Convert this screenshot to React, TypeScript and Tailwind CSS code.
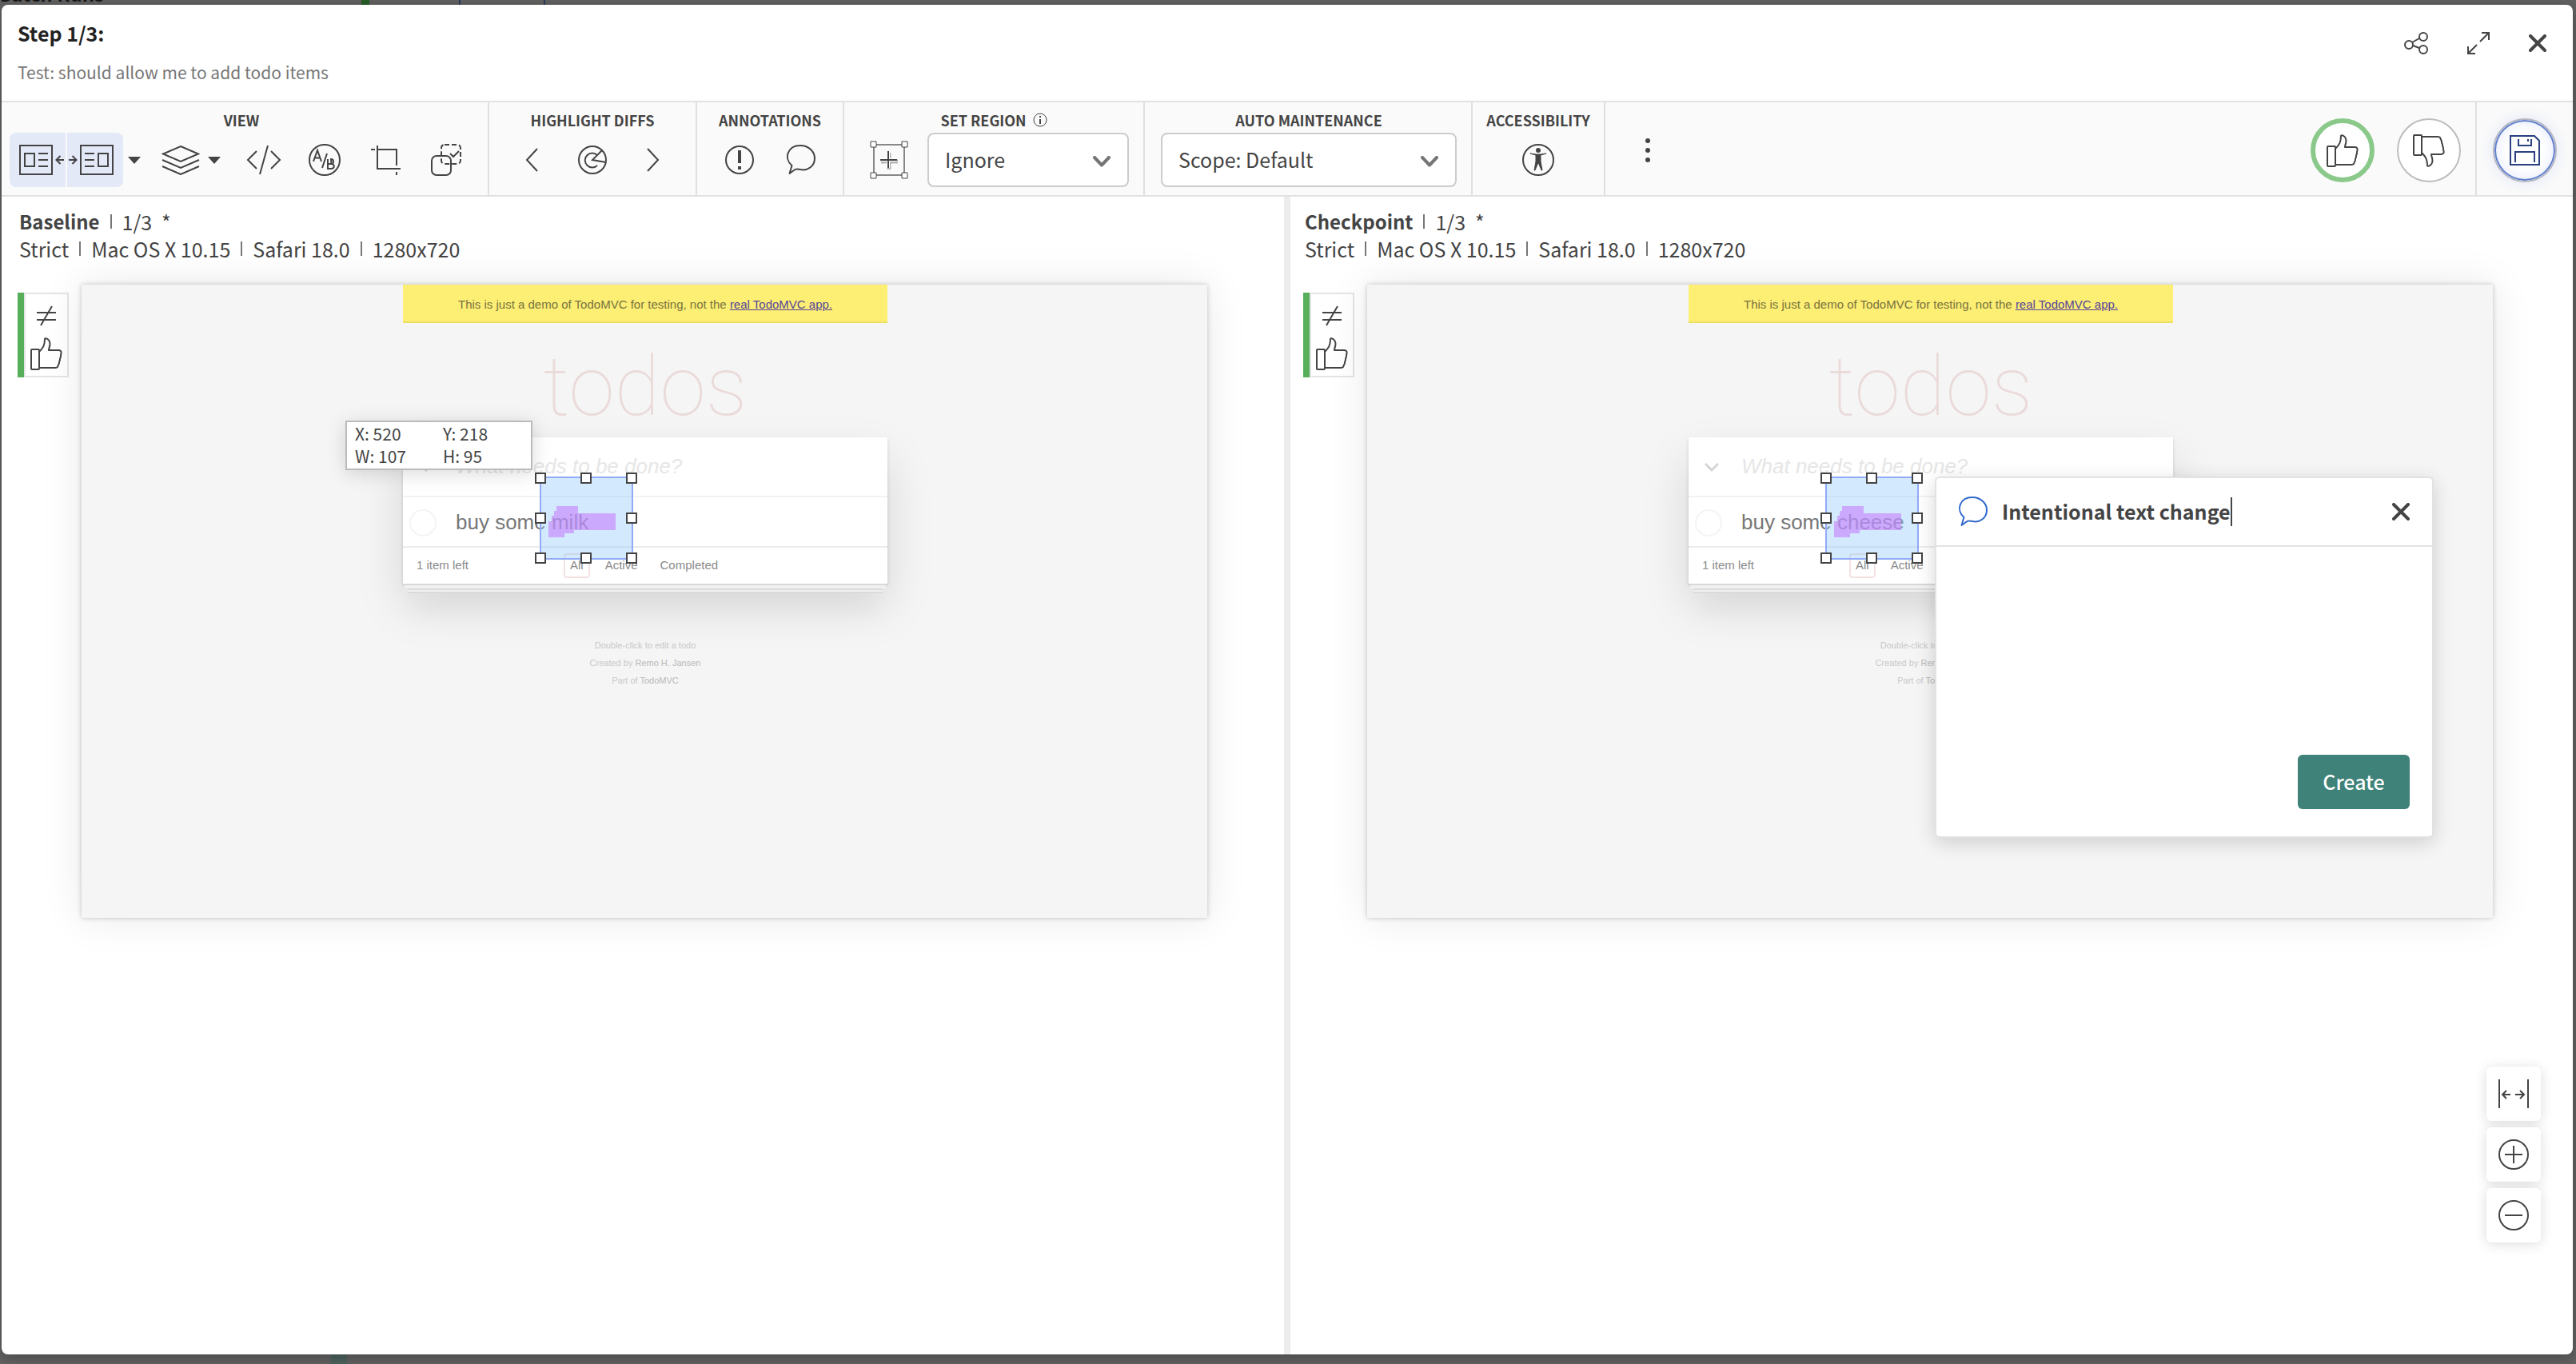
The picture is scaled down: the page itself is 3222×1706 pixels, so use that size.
import type { ReactNode } from "react";

function Svg({ w, h, sw = 2, className = "", children }: { w: number; h: number; sw?: number; className?: string; children: ReactNode }) {
  return (
    <svg width={w} height={h} viewBox={`0 0 ${w} ${h}`} fill="none" stroke="currentColor" strokeWidth={sw} aria-hidden="true" className={`shrink-0 ${className}`}>
      {children}
    </svg>
  );
}

function ThumbIcon({ down = false }: { down?: boolean }) {
  return (
    <Svg w={40} h={41}>
      <g transform={down ? "matrix(1 0 0 -1 0 41)" : undefined} strokeLinejoin="round">
        <rect x="1" y="15" width="10" height="25" rx="1" />
        <path d="M11 18C16 13 18 10 18 2C18 0.5 24 1 24.500 8C24.500 12 22.500 15 23 16H35C38 16 39 17.500 38.500 20C38.500 21 37.500 22 38 24C38 25 36.500 26 37 28C37 29.500 35.500 30 36 32C36 33.500 34.500 34 34.500 36C34 37.500 33 38 31 38H11" />
      </g>
    </Svg>
  );
}

function BubbleIcon() {
  return (
    <Svg w={38} h={38}>
      <path d="M5.500 36L8.500 26C-2 17 3 1 19 1C30 1 37 9 37 17C37 27 28 33 19 31C15 30 13 30 11 32Z" strokeLinejoin="round" />
    </Svg>
  );
}

function CloseIcon({ size }: { size: number }) {
  return (
    <svg width={size} height={size} viewBox="0 0 22 22" fill="none" stroke="currentColor" strokeWidth="4" strokeLinecap="round" aria-hidden="true">
      <path d="M2 2L20 20M20 2L2 20" />
    </svg>
  );
}

function Caret() {
  return (
    <svg width="16" height="9" viewBox="0 0 16 9" fill="currentColor" aria-hidden="true">
      <path d="M0 0H16L8 9Z" />
    </svg>
  );
}

function IconButton({ label, className = "w-[76px]", children }: { label: string; className?: string; children: ReactNode }) {
  return (
    <button type="button" aria-label={label} className={`flex shrink-0 items-center justify-center ${className}`}>
      {children}
    </button>
  );
}

function Group({ title, className, row = "justify-center", children }: { title: ReactNode; className: string; row?: string; children: ReactNode }) {
  return (
    <section className={`flex shrink-0 flex-col border-r-2 border-[#e0e0e0] pt-2.5 ${className}`}>
      <h2 className="mb-1 flex items-center justify-center gap-2 text-lg leading-6 font-bold whitespace-nowrap">{title}</h2>
      <div className={`flex h-[68px] items-stretch ${row}`}>{children}</div>
    </section>
  );
}

function Dropdown({ label, value }: { label: string; value: string }) {
  return (
    <div className="relative flex flex-1">
      <select aria-label={label} defaultValue={value} className="w-full appearance-none rounded-lg border-2 border-[#ccc] bg-white pr-14 pl-5 text-[25px]">
        <option>{value}</option>
      </select>
      <svg width="22" height="14" viewBox="0 0 22 14" fill="none" stroke="#757575" strokeWidth="4" strokeLinecap="round" strokeLinejoin="round" aria-hidden="true" className="pointer-events-none absolute top-[29px] right-[23px]">
        <path d="M2 2L11 11.500L20 2" />
      </svg>
    </div>
  );
}

function Toolbar() {
  return (
    <div className="flex h-[120px] shrink-0 border-y-2 border-[#e2e2e2] bg-[#fafafa]">
      <Group title="VIEW" className="w-[610px] pr-[18px] pl-2.5" row="justify-start">
        <IconButton label="Show baseline" className="w-[70px] rounded-l-lg bg-[#e4e9f8]">
          <Svg w={70} h={40}>
            <path d="M13 2H53V38H13ZM19 12H31V28H19ZM36 12H48M36 20H48M36 28H48M68 20H59M63.500 15L58.500 20L63.500 25" />
          </Svg>
        </IconButton>
        <IconButton label="Show checkpoint" className="ml-0.5 w-[70px] rounded-r-lg bg-[#e4e9f8]">
          <Svg w={70} h={40}>
            <path d="M17 2H57V38H17ZM39 12H51V28H39ZM22 12H34M22 20H34M22 28H34M2 20H11M6.500 15L11.500 20L6.500 25" />
          </Svg>
        </IconButton>
        <IconButton label="View options" className="w-7"><Caret /></IconButton>
        <IconButton label="Layers" className="ml-4 w-14">
          <Svg w={48} h={38}>
            <path d="M24 2L46 11.500L24 21L2 11.500ZM1 19L24 29L47 19M1 27L24 37L47 27" />
          </Svg>
        </IconButton>
        <IconButton label="Layer options" className="w-7"><Caret /></IconButton>
        <IconButton label="View code" className="ml-2.5 w-[76px]">
          <Svg w={44} h={38}>
            <path d="M13 8L2 19L13 30M31 8L42 19L31 30M27 1L17 37" />
          </Svg>
        </IconButton>
        <IconButton label="A/B variations">
          <Svg w={42} h={42}>
            <circle cx="21" cy="21" r="19" />
            <path d="M7 23L12 9L17 23M9 18.500H15M24 13L18 31" />
            <path d="M25 20V32H29C34 32 34 26 29.500 26H25M29.500 26C33 26 33 20 29 20Z" />
          </Svg>
        </IconButton>
        <IconButton label="Crop">
          <Svg w={38} h={38}>
            <path d="M9 1V30H38M14 6H33V26M1 6H6M33 34V38M9 6H14" />
          </Svg>
        </IconButton>
        <IconButton label="Select regions">
          <Svg w={40} h={42}>
            <rect x="2" y="16" width="24" height="24" rx="6" />
            <rect x="14" y="2" width="24" height="24" rx="4" strokeDasharray="6 3" />
            <path d="M25 13L29 17L36 10" />
          </Svg>
        </IconButton>
      </Group>
      <Group title="HIGHLIGHT DIFFS" className="w-[260px]">
        <IconButton label="Previous diff"><Svg w={16} h={30}><path d="M15 1L2 15L15 29" /></Svg></IconButton>
        <IconButton label="Radar">
          <Svg w={38} h={38}>
            <circle cx="19" cy="19" r="17" />
            <path d="M31 7L19 19L36 22M25 13A9 9 0 1 0 25 26" />
          </Svg>
        </IconButton>
        <IconButton label="Next diff"><Svg w={16} h={30}><path d="M1 1L14 15L1 29" /></Svg></IconButton>
      </Group>
      <Group title="ANNOTATIONS" className="w-[184px]">
        <IconButton label="Add issue">
          <Svg w={38} h={38}>
            <circle cx="19" cy="19" r="17" />
            <path d="M19 7V23M19 27V31" strokeWidth="4" />
          </Svg>
        </IconButton>
        <IconButton label="Add comment"><BubbleIcon /></IconButton>
      </Group>
      <Group
        title={
          <>
            SET REGION
            <Svg w={18} h={18} sw={1}>
              <circle cx="9" cy="9" r="8" />
              <path d="M9 8V14M9 4V6" strokeWidth="2" />
            </Svg>
          </>
        }
        className="w-[376px] px-[18px]"
      >
        <IconButton label="Draw region" className="mr-2.5 w-[76px]">
          <Svg w={48} h={48}>
            <rect x="5" y="5" width="38" height="38" stroke="#888" />
            <path d="M24 15V36M14 26H35" stroke="#b5b5b5" strokeWidth="5" />
            <path d="M23 13V34M13 24H34" stroke="#fff" strokeWidth="4" />
            <path d="M23 13V34M13 24H34" />
            <path d="M1 1H8V8H1ZM40 1H47V8H40ZM1 40H8V47H1ZM40 40H47V47H40Z" fill="#fff" strokeWidth="1" />
          </Svg>
        </IconButton>
        <Dropdown label="Set region" value="Ignore" />
      </Group>
      <Group title="AUTO MAINTENANCE" className="w-[410px] pr-[18px] pl-5">
        <Dropdown label="Auto maintenance" value="Scope: Default" />
      </Group>
      <Group title="ACCESSIBILITY" className="w-[166px]">
        <IconButton label="Accessibility">
          <Svg w={42} h={42}>
            <circle cx="21" cy="21" r="19" />
            <circle cx="21" cy="9" r="3" fill="currentColor" stroke="none" />
            <path d="M11 13L18 15V23L16 34H17L21 24L25 34H26L24 23V15L31 13L24 14H18L11 13Z" fill="currentColor" strokeWidth="1" strokeLinejoin="round" />
          </Svg>
        </IconButton>
      </Group>
      <IconButton label="More actions" className="w-[106px] pt-1">
        <svg width="6" height="30" viewBox="0 0 6 30" fill="currentColor" aria-hidden="true">
          <circle cx="3" cy="3" r="3" />
          <circle cx="3" cy="15" r="3" />
          <circle cx="3" cy="27" r="3" />
        </svg>
      </IconButton>
      <div className="ml-auto flex items-center gap-7 border-r-2 border-[#e0e0e0] pt-1 pr-[18px]">
        <IconButton label="Accept" className="size-20 rounded-full border-[6px] border-[#8bc98b] bg-white"><ThumbIcon /></IconButton>
        <IconButton label="Reject" className="size-20 rounded-full border-2 border-[#bdbdbd] bg-white"><ThumbIcon down /></IconButton>
      </div>
      <div className="flex items-center px-5 pt-1">
        <IconButton label="Save" className="size-20 rounded-full border-2 border-[#b4b7c2] bg-white text-[#2a4080] shadow-[inset_0_0_0_2px_#5f7fd0,inset_0_0_18px_#dde4f8,0_0_18px_#dfe5f5]">
          <Svg w={38} h={38}>
            <path d="M1 1H31L37 7V37H1ZM11 5V13H27V5M23 5V8M7 34V21H31V34" />
          </Svg>
        </IconButton>
      </div>
    </div>
  );
}

function Separator() {
  return <span className="mx-[13px] h-[18px] w-0.5 shrink-0 bg-[#777]" />;
}

const handles = [
  "-top-[7px] -left-2",
  "-top-[7px] left-[49px]",
  "-top-[7px] -right-[7px]",
  "top-[43px] -left-2",
  "top-[43px] -right-[7px]",
  "-bottom-[7px] -left-2",
  "-bottom-[7px] left-[49px]",
  "-bottom-[7px] -right-[7px]",
];

function Selection() {
  return (
    <div className="absolute top-[240px] left-[171px] h-[104px] w-[117px] border-2 border-[#92aaf7] bg-[#90c8fa]/40">
      <svg width="84" height="40" viewBox="0 0 84 40" className="absolute top-[35px] left-[9px]" aria-hidden="true">
        <path d="M10 0H37V9H84V30H32V34H20V39H0V19H4V12H7V6H10Z" fill="#c77ffc" fillOpacity="0.6" />
      </svg>
      {handles.map((place) => (
        <span key={place} className={`absolute size-3.5 border-2 border-[#444] bg-white ${place}`} />
      ))}
    </div>
  );
}

function Coordinates() {
  return (
    <div className="absolute top-[170px] -left-[72px] grid w-[234px] grid-cols-[110px_1fr] border-2 border-[#bbb] bg-white pb-0.5 pl-2.5 font-['Noto_Sans_CJK_SC',sans-serif] text-[21px] leading-7 font-normal text-[#444] shadow-[0_4px_24px_rgba(0,0,0,0.15)]">
      <span>X: 520</span>
      <span>Y: 218</span>
      <span>W: 107</span>
      <span>H: 95</span>
    </div>
  );
}

function NotePopup() {
  return (
    <div className="absolute top-[240px] left-[308px] flex h-[452px] w-[624px] flex-col rounded-md border-2 border-[#e2e2e2] bg-white font-['Noto_Sans_CJK_SC',sans-serif] text-[#444] shadow-[0_6px_24px_rgba(0,0,0,0.16)]">
      <div className="flex h-[86px] shrink-0 items-center border-b-2 border-[#e2e2e2] pr-7 pl-[26px]">
        <span className="mr-[18px] text-[#2f68cc]"><BubbleIcon /></span>
        <input aria-label="Comment title" defaultValue="Intentional text change" className="field-sizing-content text-[25px] font-bold outline-none" />
        <span className="h-9 w-0.5 bg-[#444]" />
        <button type="button" aria-label="Close comment" className="ml-auto"><CloseIcon size={22} /></button>
      </div>
      <textarea aria-label="Comment" className="flex-1 resize-none outline-none" />
      <button type="button" className="mr-7 mb-[34px] h-[68px] w-[140px] self-end rounded-md bg-[#3f8279] text-[25px] font-medium text-white">Create</button>
    </div>
  );
}

function TodoApp({ word, children }: { word: string; children: ReactNode }) {
  return (
    <div className="relative mx-auto w-[606px] font-['Liberation_Sans',Arial,sans-serif] font-light">
      <p className="border-b-2 border-[#eedf5e] bg-[#fdee74] pt-[13px] pb-[9px] text-center text-[15px] leading-6 whitespace-nowrap text-[#77733f]">
        This is just a demo of TodoMVC for testing, not the <a href="#real" className="text-[#55459a] underline">real TodoMVC app.</a>
      </p>
      <h3 className="h-[143px] pt-5 text-center font-['Roboto',sans-serif] text-[104px] leading-[120px] font-thin text-[#ebdada]">todos</h3>
      <div className="bg-white shadow-[0_2px_4px_rgba(0,0,0,0.15),0_28px_55px_rgba(0,0,0,0.13)]">
        <div className="flex h-[75px] items-center border-b-2 border-[#f2f2f2] pl-5">
          <Svg w={18} h={12} sw={3} className="text-[#d5d5d5]"><path d="M1 2L9 10L17 2" /></Svg>
          <input aria-label="New todo" placeholder="What needs to be done?" className="ml-7 w-[400px] text-[26px] italic outline-none placeholder:text-[#e6e6e6]" />
        </div>
        <div className="flex h-[63px] items-center border-b-2 border-[#ececec] pt-0.5 pl-2 text-[26px] text-[#777]">
          <input type="checkbox" aria-label="Completed" className="mr-6 size-[34px] appearance-none rounded-full border-2 border-[#f4f4f4]" />
          buy some {word}
        </div>
        <div className="flex h-[45px] items-center text-[15px] text-[#8a8a8a]">
          <span className="w-[184px] pl-[17px]">1 item left</span>
          <nav className="flex items-center">
            <a href="#all" className="ml-[17px] rounded-sm border-2 border-[#f3e2e2] px-1.5 py-0.5">All</a>
            <a href="#active" className="ml-[19px]">Active</a>
            <a href="#completed" className="ml-7">Completed</a>
          </nav>
        </div>
      </div>
      <div className="relative mx-0.5 h-1.5 border-t-2 border-[#d8d8d8] bg-[#f1f1f1]" />
      <div className="relative mx-1.5 h-1.5 border-y-2 border-[#dadada] bg-[#f1f1f1] shadow-[0_16px_24px_rgba(0,0,0,0.06)]" />
      <footer className="pt-[54px] text-center text-[11px] leading-[22px] text-[#c8c8c8]">
        <p>Double-click to edit a todo</p>
        <p>Created by <a href="#author" className="text-[#b8b8b8]">Remo H. Jansen</a></p>
        <p>Part of <a href="#todomvc" className="text-[#b8b8b8]">TodoMVC</a></p>
      </footer>
      <Selection />
      {children}
    </div>
  );
}

function Pane({ title, className, word, children }: { title: string; className: string; word: string; children: ReactNode }) {
  return (
    <section className={`min-w-0 flex-1 border-[#ececec] pt-3.5 ${className}`}>
      <div className="pl-0.5 text-[25px] leading-[34px] whitespace-nowrap">
        <p className="flex items-center">
          <b className="text-2xl leading-[34px]">{title}</b>
          <Separator />
          1/3<span className="ml-3">*</span>
        </p>
        <p className="flex items-center">
          Strict<Separator />Mac OS X 10.15<Separator />Safari 18.0<Separator />1280x720
        </p>
      </div>
      <div className="mt-7 flex items-start gap-4">
        <div className="mt-2.5 flex h-[106px] w-16 shrink-0 border-2 border-l-0 border-[#e4e4e4] bg-white">
          <span className="-my-0.5 w-2 shrink-0 bg-[#57ae5b]" />
          <div className="flex flex-1 flex-col items-center gap-3.5 border-l-2 border-[#e4e4e4] pt-3.5">
            <Svg w={24} h={26}>
              <path d="M0 9H24M0 18H24M19 1L5 25" />
            </Svg>
            <ThumbIcon />
          </div>
        </div>
        <div className="aspect-[1280/720] min-w-0 flex-1 bg-[#f5f5f5] pl-0.5 shadow-[0_0_6px_rgba(0,0,0,0.22),0_0_50px_rgba(0,0,0,0.09)]">
          <TodoApp word={word}>{children}</TodoApp>
        </div>
      </div>
    </section>
  );
}

export default function App() {
  return (
    <div className="flex h-screen flex-col overflow-hidden bg-[#636363] pr-1 pl-0.5 font-['Noto_Sans_CJK_SC',sans-serif] text-[#444]">
      <div className="flex h-1.5 shrink-0 items-end overflow-hidden">
        <span className="-ml-1 w-[454px] pb-1 text-2xl leading-5 font-bold text-[#181818]">Batch Runs</span>
        <span className="h-full w-2.5 bg-[#276127]" />
        <span className="ml-[112px] h-full w-[108px] border-x-2 border-[#2f3a63]" />
      </div>
      <main className="relative flex min-h-0 flex-1 flex-col rounded-lg bg-white shadow-[0_4px_20px_rgba(0,0,0,0.3)]">
        <header className="flex h-[120px] shrink-0 justify-between pr-[33px] pl-5">
          <div>
            <h1 className="mt-3.5 text-[25px] leading-[42px] font-bold text-[#222]">Step 1/3:</h1>
            <p className="mt-3 text-[21px] leading-8 text-[#777]">Test: should allow me to add todo items</p>
          </div>
          <div className="flex h-24 items-center gap-12">
            <button type="button" aria-label="Share">
              <Svg w={30} h={28}>
                <circle cx="6" cy="16" r="5" />
                <circle cx="24" cy="6" r="5" />
                <circle cx="24" cy="22" r="5" />
                <path d="M10 13L19 8M11 17L19 20" />
              </Svg>
            </button>
            <button type="button" aria-label="Full screen">
              <Svg w={30} h={30}>
                <path d="M17 13L28 2M19 2H28V11M13 17L2 28M11 28H2V19" />
              </Svg>
            </button>
            <button type="button" aria-label="Close"><CloseIcon size={22} /></button>
          </div>
        </header>
        <Toolbar />
        <div className="flex min-h-0 flex-1">
          <Pane title="Baseline" word="milk" className="border-r-4 pr-24 pl-5"><Coordinates /></Pane>
          <Pane title="Checkpoint" word="cheese" className="border-l-4 pr-[100px] pl-4"><NotePopup /></Pane>
        </div>
        <div className="absolute right-10 bottom-[140px] flex flex-col gap-2">
          <IconButton label="Fit width" className="size-[68px] rounded-md bg-white shadow-[0_2px_16px_rgba(0,0,0,0.14)]">
            <Svg w={40} h={38}>
              <path d="M2 1V37M38 1V37M16 20H7M11 15L6 20L11 25M22 20H33M28 15L33 20L28 25" />
            </Svg>
          </IconButton>
          <IconButton label="Zoom in" className="size-[68px] rounded-md bg-white shadow-[0_2px_16px_rgba(0,0,0,0.14)]">
            <Svg w={38} h={38}><circle cx="19" cy="19" r="18" /><path d="M19 8V30M8 19H30" /></Svg>
          </IconButton>
          <IconButton label="Zoom out" className="size-[68px] rounded-md bg-white shadow-[0_2px_16px_rgba(0,0,0,0.14)]">
            <Svg w={38} h={38}><circle cx="19" cy="19" r="18" /><path d="M8 19H30" /></Svg>
          </IconButton>
        </div>
      </main>
      <div className="flex h-3 shrink-0 pl-[412px]"><span className="h-full w-5 bg-[#4f6460]" /></div>
    </div>
  );
}
